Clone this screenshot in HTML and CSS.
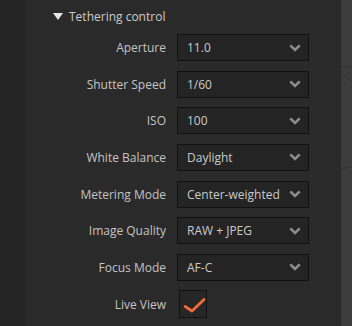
FILE: index.html
```html
<!DOCTYPE html>
<html>
<head>
<meta charset="utf-8">
<link rel="stylesheet" href="styles.css">
</head>
<body>
<div class="app">
  <div class="gutter"></div>
  <div class="panel">
    <div class="header">
      <span class="tri"></span>
      <span class="title">Tethering control</span>
    </div>
    <div class="form">
      <div class="label">Aperture</div>
      <div class="select"><span>11.0</span><svg class="chev" viewBox="0 0 12 8"><path d="M1.3 1.3 L6 6 L10.7 1.3" /></svg></div>
      <div class="label">Shutter Speed</div>
      <div class="select"><span>1/60</span><svg class="chev" viewBox="0 0 12 8"><path d="M1.3 1.3 L6 6 L10.7 1.3" /></svg></div>
      <div class="label">ISO</div>
      <div class="select"><span>100</span><svg class="chev" viewBox="0 0 12 8"><path d="M1.3 1.3 L6 6 L10.7 1.3" /></svg></div>
      <div class="label">White Balance</div>
      <div class="select"><span>Daylight</span><svg class="chev" viewBox="0 0 12 8"><path d="M1.3 1.3 L6 6 L10.7 1.3" /></svg></div>
      <div class="label">Metering Mode</div>
      <div class="select"><span>Center-weighted</span><svg class="chev" viewBox="0 0 12 8"><path d="M1.3 1.3 L6 6 L10.7 1.3" /></svg></div>
      <div class="label">Image Quality</div>
      <div class="select"><span>RAW + JPEG</span><svg class="chev" viewBox="0 0 12 8"><path d="M1.3 1.3 L6 6 L10.7 1.3" /></svg></div>
      <div class="label">Focus Mode</div>
      <div class="select"><span>AF-C</span><svg class="chev" viewBox="0 0 12 8"><path d="M1.3 1.3 L6 6 L10.7 1.3" /></svg></div>
      <div class="label">Live View</div>
      <div class="checkcell"><div class="check"><svg viewBox="0 0 26 26"><path d="M5.2 15.5 L12 20 L24 8.5" /></svg></div></div>
    </div>
  </div>
  <div class="side">
    <svg class="cracks" viewBox="0 0 11 326" preserveAspectRatio="none"><path d="M0 67 L11 67" /><path d="M0 73 L5 76 L11 82" /><path d="M0 169 L4 168 L11 167" /></svg>
  </div>
</div>
</body>
</html>
```
FILE: styles.css
```css
html, body {
  margin: 0;
  padding: 0;
  background: #2a2a2a;
}
.app {
  display: flex;
  width: 352px;
  height: 326px;
  font-family: "Open Sans", "Noto Sans", sans-serif;
  font-size: 12px;
  color: #c4c4c4;
}
.gutter {
  width: 26px;
  background: #252525;
}
.panel {
  width: 315px;
  background: #2a2a2a;
  padding-top: 7px;
  box-sizing: border-box;
}
.side {
  width: 11px;
  background: #3c3c3c;
  position: relative;
}
.cracks {
  position: absolute;
  inset: 0;
  width: 100%;
  height: 100%;
}
.cracks path {
  fill: none;
  stroke: #2e2e2e;
  stroke-width: 0.8;
}
.header {
  display: flex;
  align-items: center;
  height: 18px;
  padding-left: 27px;
  margin-bottom: 9px;
}
.tri {
  width: 0;
  height: 0;
  border-left: 5.5px solid transparent;
  border-right: 5.5px solid transparent;
  border-top: 7px solid #e6e6e6;
  margin-right: 6px;
}
.title {
  color: #cccccc;
}
.form {
  display: grid;
  grid-template-columns: 140px 132px;
  grid-auto-rows: 27px;
  column-gap: 11px;
  row-gap: 9.67px;
  align-items: center;
}
.label {
  text-align: right;
}
.select {
  height: 27px;
  box-sizing: border-box;
  border: 1px solid #111;
  background: #242424;
  display: flex;
  align-items: center;
  justify-content: space-between;
  padding: 0 7px 0 9px;
  color: #cacaca;
}
.chev {
  width: 12px;
  height: 8px;
}
.chev path {
  fill: none;
  stroke: #8c8c8c;
  stroke-width: 2.6;
}
.checkcell {
  display: flex;
  padding-left: 2px;
  height: 28px;
}
.check {
  width: 28px;
  height: 28px;
  box-sizing: border-box;
  border: 1px solid #111;
  background: #262626;
}
.check svg {
  width: 26px;
  height: 26px;
  display: block;
}
.check path {
  fill: none;
  stroke: #f26a3a;
  stroke-width: 2.8;
  stroke-linecap: round;
  stroke-linejoin: round;
}
```
